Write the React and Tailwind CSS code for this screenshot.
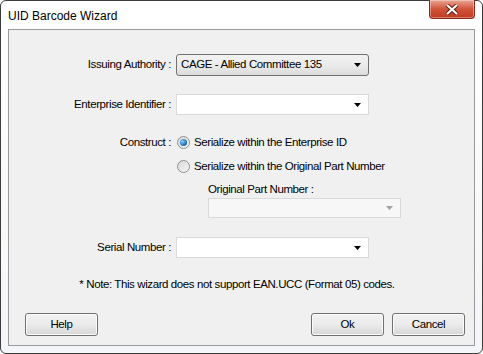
import React from 'react';

const font = { fontFamily: '"Liberation Sans", Arial, sans-serif' };

const Arrow = ({ color = '#000' }) => (
  <svg width="7" height="4" viewBox="0 0 7 4" className="shrink-0">
    <path d="M0 0 H7 L3.5 4 Z" fill={color} />
  </svg>
);

const Radio = ({ checked }) => (
  <span className="relative w-[13px] h-[13px] rounded-full border border-[#8e8f8f] bg-gradient-to-br from-[#d8d8d8] to-[#f8f8f8] flex items-center justify-center shrink-0">
    {checked && (
      <span className="w-[7px] h-[7px] rounded-full bg-[radial-gradient(circle_at_35%_35%,#7fd0ff,#1a62a8_70%,#0f3f78)]" />
    )}
  </span>
);

const Button = ({ children }) => (
  <button className="w-[73px] h-[23px] rounded-[3px] border border-[#707070] bg-gradient-to-b from-[#f2f2f2] via-[#ebebeb] to-[#d6d6d6] text-[11.5px] text-black shadow-[inset_0_0_0_1px_#fcfcfc]">
    {children}
  </button>
);

const Label = ({ children }) => (
  <div className="w-[167px] pr-[5px] text-right">{children}</div>
);

export default function App() {
  return (
    <div style={font} className="w-[483px] h-[354px] bg-white">
      <div className="w-full h-full rounded-[6px] border border-[#3c3c3c] bg-gradient-to-b from-[#ffffff] to-[#f3f5f8] flex flex-col px-[7px] pb-[7px] relative">
        {/* title bar */}
        <div className="h-[28px] flex items-center justify-between">
          <span className="text-[12px] text-black pt-[2px]">UID Barcode Wizard</span>
          <div className="self-start -mt-[1px] w-[46px] h-[19px] rounded-b-[4px] border border-[#8a2b1c] border-t-0 bg-gradient-to-b from-[#e8a493] via-[#d0533a] to-[#c13a22] shadow-[inset_0_0_0_1px_rgba(255,255,255,0.35)] flex items-center justify-center">
            <svg width="14" height="11" viewBox="0 0 14 11">
              <path d="M2 1 L12 10 M12 1 L2 10" stroke="#5a1a10" strokeWidth="4" fill="none" />
              <path d="M2 1 L12 10 M12 1 L2 10" stroke="#ffffff" strokeWidth="2.2" fill="none" />
            </svg>
          </div>
        </div>

        {/* client area */}
        <div className="flex-1 border border-[#9a9a9a] bg-[#f0f0f0] flex flex-col text-[11.5px] text-black tracking-[-0.4px]">
          <div className="flex items-center mt-[24px]">
            <Label>Issuing Authority :</Label>
            <div className="w-[193px] h-[22px] rounded-[3px] border border-[#707070] bg-gradient-to-b from-[#f2f2f2] via-[#ebebeb] to-[#dcdcdc] flex items-center justify-between pl-[4px] pr-[7px]">
              <span>CAGE - Allied Committee 135</span>
              <Arrow />
            </div>
          </div>

          <div className="flex items-center mt-[18px]">
            <Label>Enterprise Identifier :</Label>
            <div className="w-[193px] h-[21px] border border-[#dadada] bg-white flex items-center justify-end pr-[7px]">
              <Arrow />
            </div>
          </div>

          <div className="flex items-center mt-[19px]">
            <Label>Construct :</Label>
            <div className="flex items-center gap-[4px] pl-[1px]">
              <Radio checked />
              <span>Serialize within the Enterprise ID</span>
            </div>
          </div>

          <div className="flex items-center mt-[7px] pl-[168px]">
            <div className="flex items-center gap-[4px]">
              <Radio />
              <span>Serialize within the Original Part Number</span>
            </div>
          </div>

          <div className="pl-[199px] mt-[8px] leading-none">Original Part Number :</div>

          <div className="ml-[199px] mt-[3px] w-[193px] h-[20px] border border-[#d9d9d9] bg-[#f7f7f7] flex items-center justify-end pr-[7px]">
            <Arrow color="#a0a0a0" />
          </div>

          <div className="flex items-center mt-[19px]">
            <Label>Serial Number :</Label>
            <div className="w-[193px] h-[21px] border border-[#dadada] bg-white flex items-center justify-end pr-[7px]">
              <Arrow />
            </div>
          </div>

          <div className="text-center mt-[18px] pr-[9px]">
            * Note: This wizard does not support EAN.UCC (Format 05) codes.
          </div>

          <div className="mt-auto mb-[9px] flex items-center pl-[16px] pr-[9px]">
            <Button>Help</Button>
            <div className="flex-1" />
            <Button>Ok</Button>
            <div className="w-[8px]" />
            <Button>Cancel</Button>
          </div>
        </div>
      </div>
    </div>
  );
}
